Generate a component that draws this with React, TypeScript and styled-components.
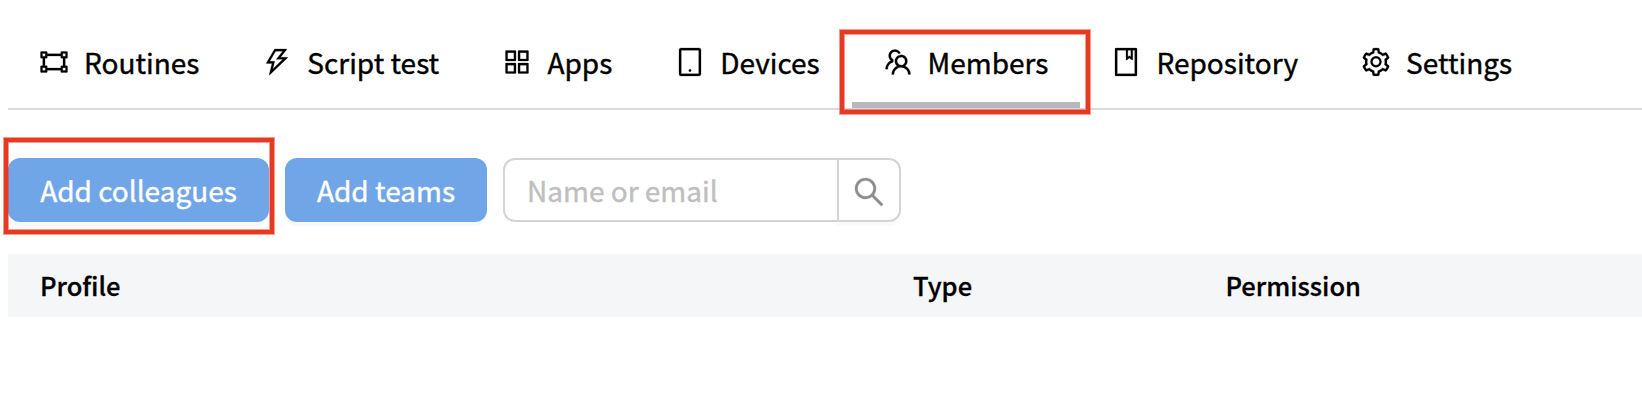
import React from 'react';
import styled, { createGlobalStyle } from 'styled-components';
import {
  AiOutlineGateway, AiOutlineThunderbolt, AiOutlineAppstore, AiOutlineTablet,
  AiOutlineTeam, AiOutlineBook, AiOutlineSetting, AiOutlineSearch,
} from 'react-icons/ai';

const GlobalStyle = createGlobalStyle`
  * { box-sizing: border-box; }
  body { margin: 0; background: #fff; color: #000; overflow: hidden; }
  body, button, input {
    font-family: "Noto Sans CJK KR", "Noto Sans", sans-serif;
    font-size: 28px;
    -webkit-text-stroke: 0.4px;
  }
`;

const Page = styled.main`
  position: relative;
  height: 414px;
  padding: 20px 0 0 8px;
  overflow: hidden;
`;

const TabBar = styled.nav`
  display: flex;
  height: 90px;
  border-bottom: 2px solid #d9d9de;
`;

const Tab = styled.a<{ $width: number; $pad?: number; $gap?: number; $active?: boolean }>`
  display: flex;
  flex: none;
  align-items: center;
  gap: ${(p) => p.$gap ?? 14}px;
  width: ${(p) => p.$width}px;
  height: 88px;
  padding: 0 0 4px ${(p) => p.$pad ?? 30}px;
  white-space: nowrap;
  box-shadow: ${(p) => (p.$active ? 'inset 0 -6px #b7b8be' : 'none')};
  svg { flex: none; width: 32px; height: 32px; overflow: visible; stroke-width: 8px; }
`;

const Toolbar = styled.div`
  display: flex;
  gap: 16px;
  margin-top: 48px;
`;

const Button = styled.button<{ $width: number }>`
  width: ${(p) => p.$width}px;
  height: 64px;
  padding: 0;
  border: 0;
  border-radius: 12px;
  background: #70a6e7;
  color: #fff;
  box-shadow: 0 4px 0 #f5f9fe;
  white-space: nowrap;
`;

const Search = styled.div`
  display: flex;
  width: 398px;
  height: 64px;
`;

const SearchInput = styled.input`
  width: 336px;
  min-width: 0;
  padding: 0 22px;
  border: 2px solid #d4d4d4;
  border-right: 0;
  border-radius: 12px 0 0 12px;
  outline: none;
  &::placeholder { color: #bfbfbf; opacity: 1; }
`;

const SearchButton = styled.button`
  display: flex;
  align-items: center;
  justify-content: center;
  width: 64px;
  padding: 3px 1px 0 0;
  border: 2px solid #d4d4d4;
  border-radius: 0 12px 12px 0;
  background: #fff;
  color: #8c8c8c;
  box-shadow: 0 4px 0 #fafafa;
  svg { flex: none; width: 36px; height: 36px; stroke-width: 8px; }
`;

const TableHead = styled.div`
  display: grid;
  grid-template-columns: 873px 312.5px 1fr;
  align-items: center;
  height: 63px;
  margin-top: 32px;
  padding-bottom: 2px;
  background: #f5f6f8;
  font-size: 25.5px;
  font-weight: 500;
  -webkit-text-stroke: 0.3px;
`;

const HeadCell = styled.div`
  padding-left: 32px;
`;

const Highlight = styled.div<{ $x: number; $y: number; $w: number; $h: number }>`
  position: absolute;
  left: ${(p) => p.$x}px;
  top: ${(p) => p.$y}px;
  width: ${(p) => p.$w}px;
  height: ${(p) => p.$h}px;
  border: 4px solid #e53922;
  box-shadow: 0 0 0 1px rgba(229, 57, 34, 0.5), inset 0 0 0 1px rgba(229, 57, 34, 0.5);
  pointer-events: none;
`;

const tabs = [
  { label: 'Routines', icon: AiOutlineGateway, width: 223 },
  { label: 'Script test', icon: AiOutlineThunderbolt, width: 240, gap: 14.3 },
  { label: 'Apps', icon: AiOutlineAppstore, width: 173, gap: 14.4 },
  { label: 'Devices', icon: AiOutlineTablet, width: 208, gap: 14.3 },
  { label: 'Members', icon: AiOutlineTeam, width: 228, pad: 29.5, active: true },
  { label: 'Repository', icon: AiOutlineBook, width: 249.5, gap: 14.5 },
  { label: 'Settings', icon: AiOutlineSetting, width: 220, gap: 14.6 },
];

export default function App() {
  return (
    <>
      <GlobalStyle />
      <Page>
        <TabBar>
          {tabs.map(({ label, icon: Icon, width, pad, gap, active }) => (
            <Tab key={label} $width={width} $pad={pad} $gap={gap} $active={active}>
              <Icon />
              <span>{label}</span>
            </Tab>
          ))}
        </TabBar>
        <Toolbar>
          <Button $width={261}>Add colleagues</Button>
          <Button $width={202}>Add teams</Button>
          <Search>
            <SearchInput placeholder="Name or email" />
            <SearchButton aria-label="Search"><AiOutlineSearch /></SearchButton>
          </Search>
        </Toolbar>
        <TableHead>
          <HeadCell>Profile</HeadCell>
          <HeadCell>Type</HeadCell>
          <HeadCell>Permission</HeadCell>
        </TableHead>
        <Highlight $x={840} $y={30} $w={250} $h={84} />
        <Highlight $x={4} $y={138} $w={270} $h={96} />
      </Page>
    </>
  );
}
